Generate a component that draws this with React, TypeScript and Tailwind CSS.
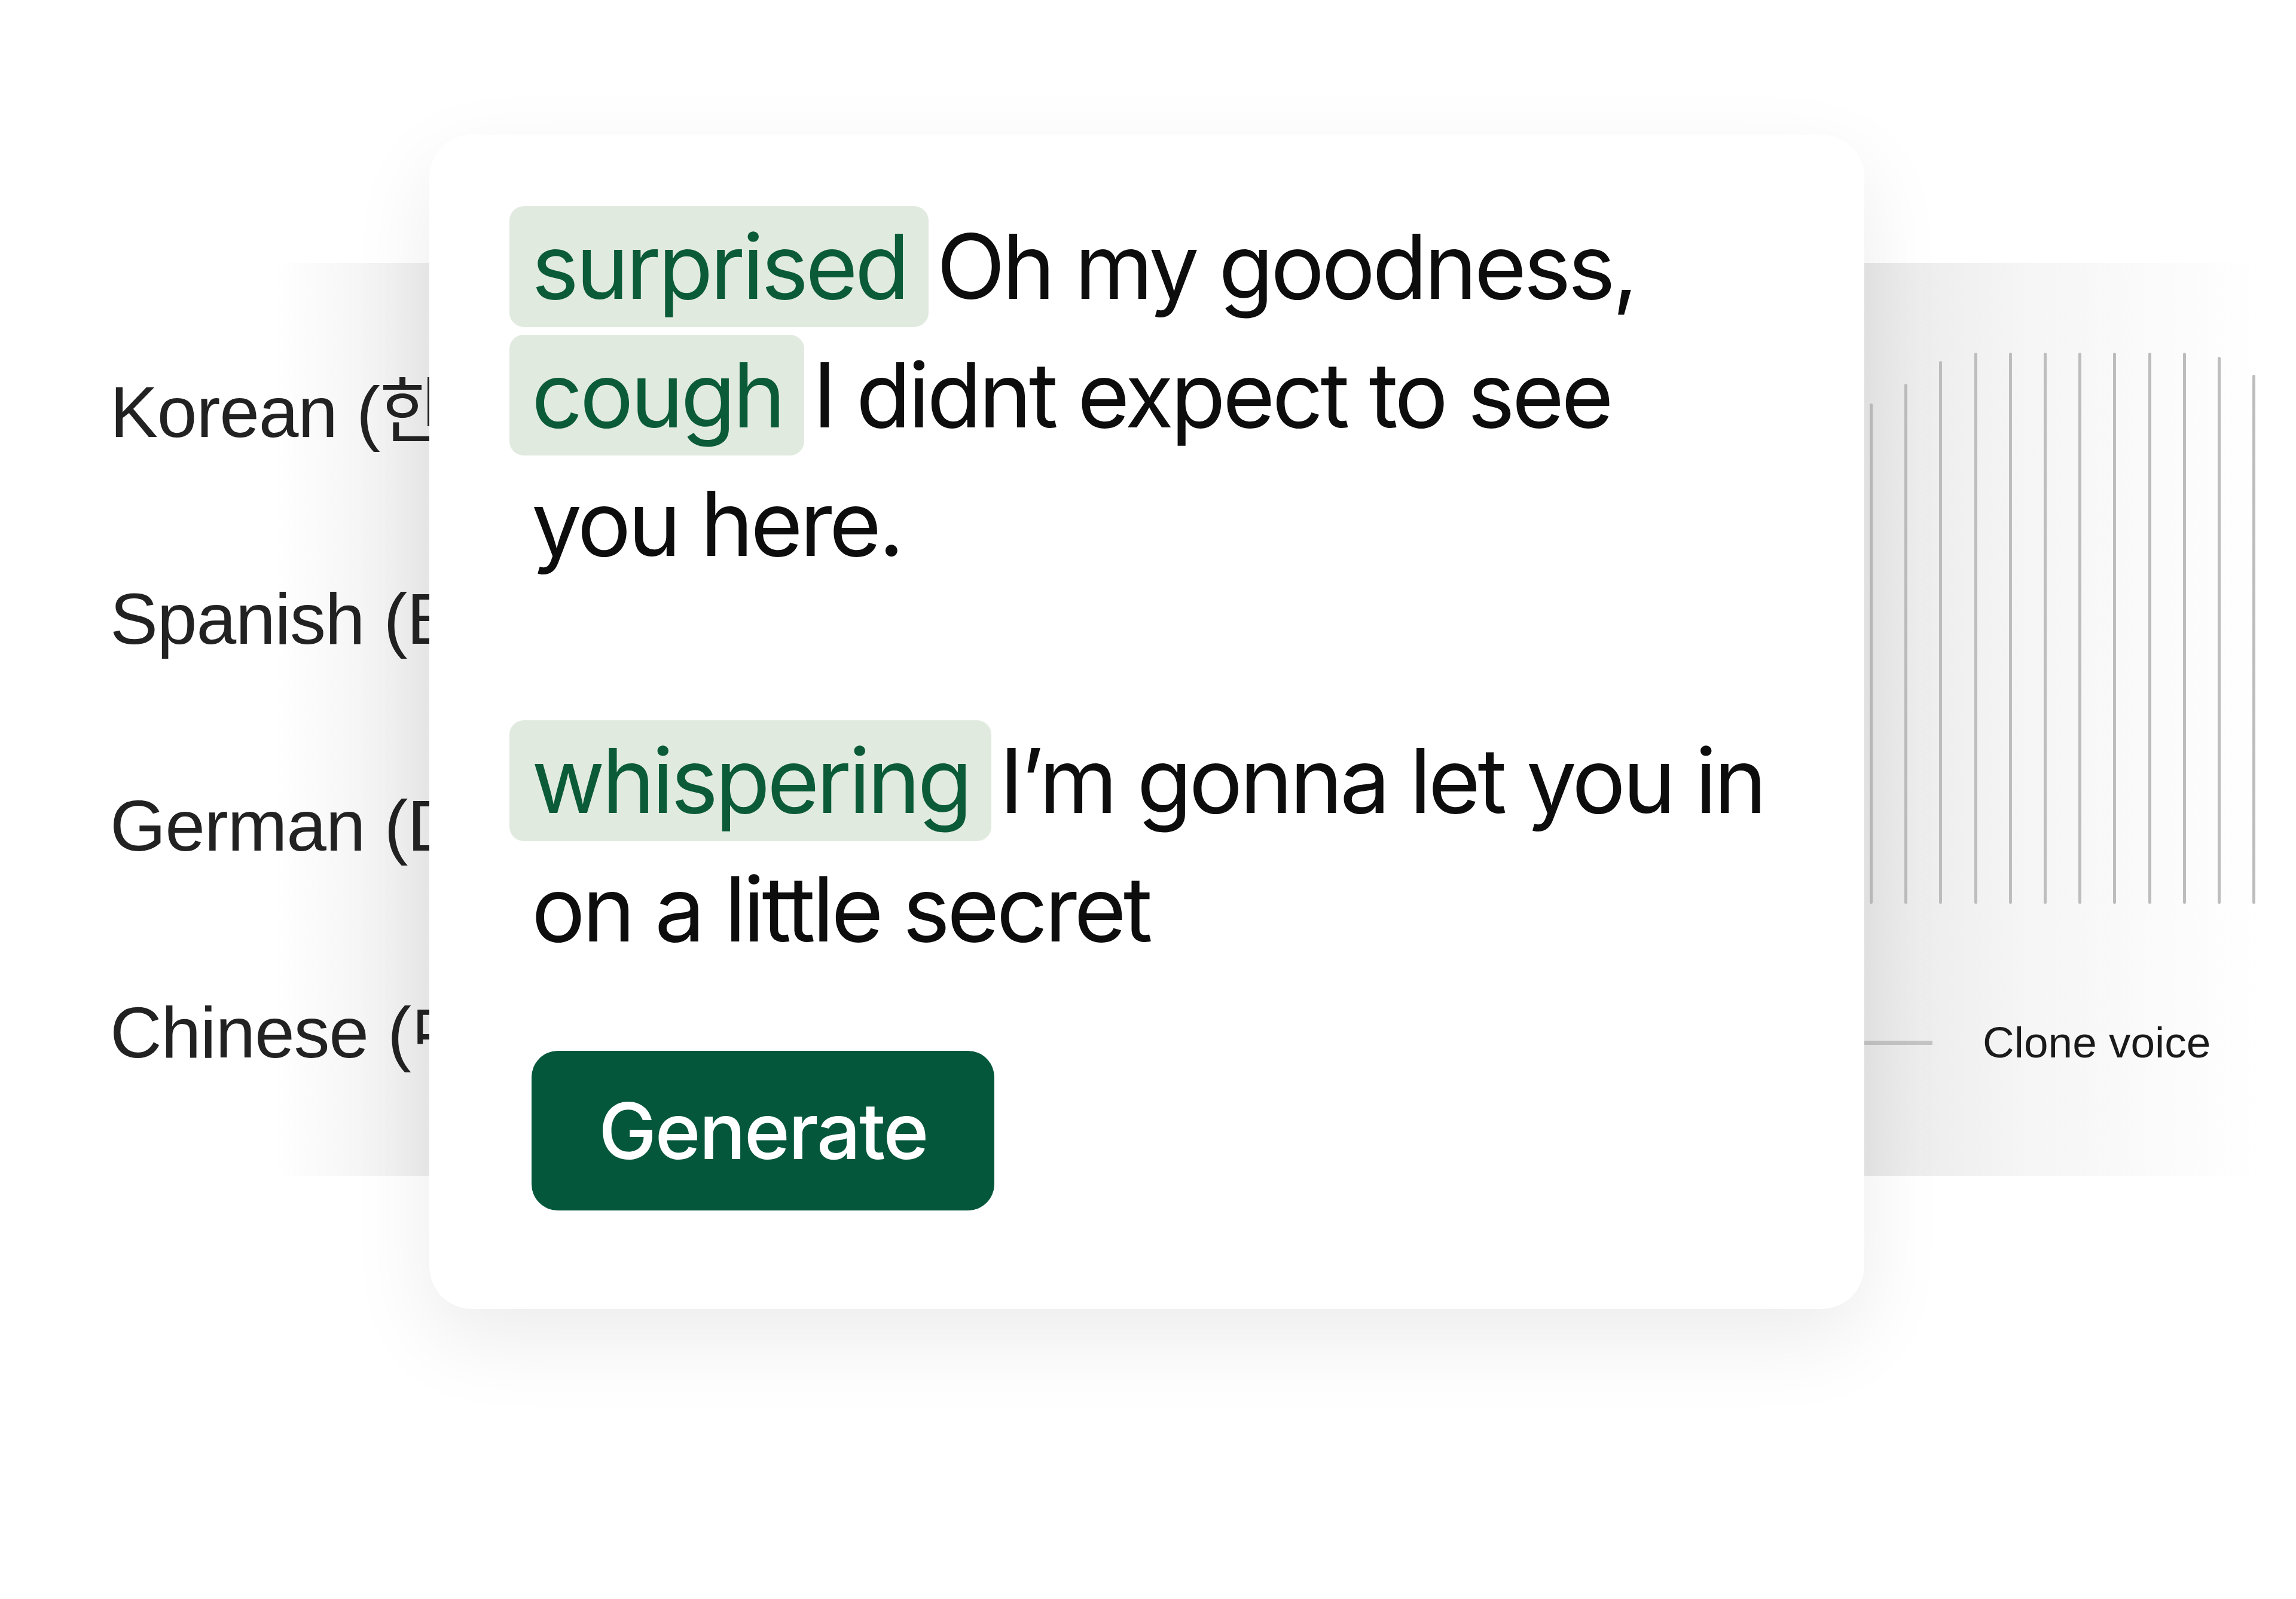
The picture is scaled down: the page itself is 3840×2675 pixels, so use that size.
import type { ReactNode } from "react";

const languages = [
  "Korean (한국어)",
  "Spanish (Español)",
  "German (Deutsch)",
  "Chinese (中文)",
];

// heights of the waveform bars, bottom aligned
const waveHeights = [837, 870, 908, 922, 922, 922, 922, 922, 922, 922, 915, 885];

function Tag({ children }: { children: ReactNode }) {
  return (
    <span className="inline-block -ml-[37px] mr-[14px] pl-[37px] pr-[36px] py-[10px] leading-[182px] rounded-[24px] bg-[#e1eadf] text-[#0b5b38]">
      {children}
    </span>
  );
}

export default function App() {
  return (
    <div className="relative w-[3840px] h-[2675px] overflow-hidden bg-white font-['Inter',sans-serif]">
      {/* Panel w tle */}
      <div className="mt-[440px] flex h-[1527px] w-full bg-[linear-gradient(90deg,#ffffff_0px,#ffffff_460px,#eeeeee_718px,#e9e9e9_3118px,#f5f5f5_3380px,#ffffff_3780px)]">
        <div className="w-[718px] shrink-0 overflow-hidden flex flex-col gap-[196px] pl-[184px] pt-[174px] whitespace-nowrap font-['Liberation_Sans','Noto_Sans_CJK_KR','Noto_Sans_CJK_SC',sans-serif] text-[120px] leading-[150px] tracking-[-0.01em] text-[#222]">
          {languages.map((l) => (
            <div key={l}>{l}</div>
          ))}
        </div>

        <div className="w-[2400px] shrink-0" />

        <div className="flex-1 flex flex-col pt-[150px]">
          <div className="flex items-end gap-[53.2px] pl-[9px] h-[922px]">
            {waveHeights.map((h, i) => (
              <div
                key={i}
                className="w-[5px] shrink-0 rounded-full bg-[#bdbdbd]"
                style={{ height: h }}
              />
            ))}
          </div>
          <div className="mt-[187px] flex items-center h-[90px]">
            <div className="w-[114px] h-[7px] bg-[#c4c4c4]" />
            <span className="ml-[84px] whitespace-nowrap font-['Liberation_Sans',sans-serif] text-[73px] leading-[90px] text-[#1a1a1a]">
              Clone voice
            </span>
          </div>
        </div>
      </div>

      {/* Karta z tekstem */}
      <div className="absolute left-[718px] top-[225px] w-[2400px] h-[1965px] rounded-[72px] bg-white shadow-[0_50px_140px_rgba(0,0,0,0.08)] pl-[171px] pt-[113px]">
        <div className="text-[150px] leading-[215px] tracking-[-0.033em] text-[#0d0d0d]">
          <div className="whitespace-nowrap">
            <Tag>surprised</Tag>Oh my goodness,
          </div>
          <div className="whitespace-nowrap">
            <Tag>cough</Tag>I didnt expect to see
          </div>
          <div className="whitespace-nowrap">you here.</div>
          <div className="h-[215px]" />
          <div className="whitespace-nowrap">
            <Tag>whispering</Tag>I’m gonna let you in
          </div>
          <div className="whitespace-nowrap">on a little secret</div>
        </div>

        <button className="mt-[130px] w-[774px] h-[267px] rounded-[44px] bg-[#04573a] text-white text-[130px] font-medium leading-none tracking-[-0.02em]">
          Generate
        </button>
      </div>
    </div>
  );
}
